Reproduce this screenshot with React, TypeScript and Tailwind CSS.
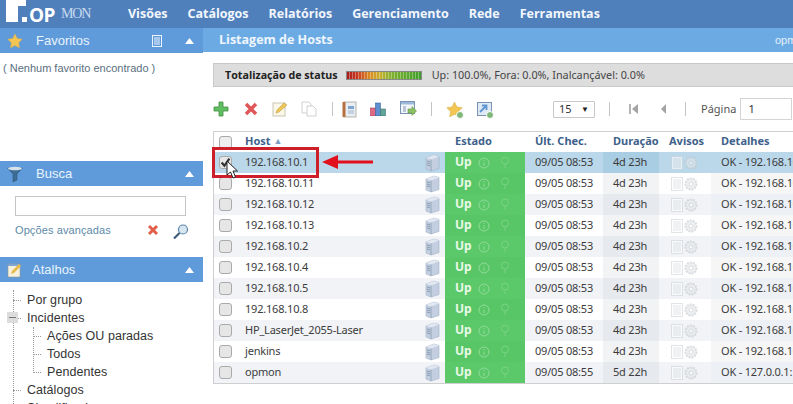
import React from 'react';

const hosts = [
  { name: '192.168.10.1', chec: '09/05 08:53', dur: '4d 23h', det: 'OK - 192.168.10.1' },
  { name: '192.168.10.11', chec: '09/05 08:53', dur: '4d 23h', det: 'OK - 192.168.10.11' },
  { name: '192.168.10.12', chec: '09/05 08:53', dur: '4d 23h', det: 'OK - 192.168.10.12' },
  { name: '192.168.10.13', chec: '09/05 08:53', dur: '4d 23h', det: 'OK - 192.168.10.13' },
  { name: '192.168.10.2', chec: '09/05 08:53', dur: '4d 23h', det: 'OK - 192.168.10.2' },
  { name: '192.168.10.4', chec: '09/05 08:53', dur: '4d 23h', det: 'OK - 192.168.10.4' },
  { name: '192.168.10.5', chec: '09/05 08:53', dur: '4d 23h', det: 'OK - 192.168.10.5' },
  { name: '192.168.10.8', chec: '09/05 08:53', dur: '4d 23h', det: 'OK - 192.168.10.8' },
  { name: 'HP_LaserJet_2055-Laser', chec: '09/05 08:53', dur: '4d 23h', det: 'OK - 192.168.10.9' },
  { name: 'jenkins', chec: '09/05 08:53', dur: '4d 23h', det: 'OK - 192.168.10.7' },
  { name: 'opmon', chec: '09/05 08:55', dur: '5d 22h', det: 'OK - 127.0.0.1: rta' },
];

const menu = ['Visões', 'Catálogos', 'Relatórios', 'Gerenciamento', 'Rede', 'Ferramentas'];

const Star = ({ s = 16 }: { s?: number }) => (
  <svg width={s} height={s} viewBox="0 0 16 16">
    <path d="M8 1l2.200 4.600 5 .7-3.600 3.500.9 5L8 12.400l-4.500 2.400.9-5L.8 6.300l5-.7z" fill="#f3c654" stroke="#dcae4a" strokeWidth=".6" />
  </svg>
);

const Up = () => (
  <svg width="9" height="6" viewBox="0 0 9 6">
    <path d="M4.500 0L9 6H0z" fill="#fff" />
  </svg>
);

const Plus2 = () => (
  <span className="absolute -right-[1px] -bottom-[1px] w-[8px] h-[8px] rounded-full bg-[#7fb77a] border border-white" />
);

const Server = () => (
  <svg width="15" height="18" viewBox="0 0 15 18" className="block">
    <path d="M1 4l8-3 5 1.500v12L6 17l-5-2z" fill="#c3cfe0" stroke="#a3b2c8" strokeWidth=".6" />
    <path d="M1 4l5 1.500L14 2.500 9 1z" fill="#e2e8f1" />
    <path d="M6 5.500V17" stroke="#8c9cb5" strokeWidth=".8" />
    <path d="M2 7l3 .8M2 9l3 .8M2 11l3 .8" stroke="#7b8ba6" strokeWidth=".8" />
  </svg>
);

const SectionHead = ({ icon, title, extra, labelAt = 'w-[36px]' }: { icon: React.ReactNode; title: string; extra?: React.ReactNode; labelAt?: string }) => (
  <div className="h-[25px] bg-[#5f9bdb] flex items-center text-[#eaf3fb]">
    <div className={`${labelAt} pl-[7px] flex items-center`}>{icon}</div>
    <span className="text-[13px]">{title}</span>
    <div className="ml-auto flex items-center pr-[9px]">
      {extra}
      <Up />
    </div>
  </div>
);

const Tree = ({ label, nested }: { label: string; nested?: boolean }) => (
  <div className={`h-[18px] flex items-center ${nested ? 'pl-[33px]' : 'pl-[13px]'}`}>
    <span className="w-[8px] border-t border-dotted border-[#999] mr-[6px]" />
    <span className="text-[#333] text-[12.5px] tracking-[0.05px]">{label}</span>
  </div>
);

const ToolIcon = ({ children, className = 'mr-[12px]' }: { children: React.ReactNode; className?: string }) => (
  <div className={`relative w-[18px] h-[18px] flex items-center justify-center ${className}`}>{children}</div>
);

const Sep = () => <div className="w-px h-[14px] bg-[#c4c4c4]" />;

export default function App() {
  return (
    <div className="relative w-[793px] h-[404px] overflow-hidden bg-white flex flex-col font-['Liberation_Sans',sans-serif] text-[12px]">
      <header className="h-[28px] bg-[#5080bc] flex items-center shrink-0">
        <div className="w-[128px] h-full relative flex items-end">
          {/* logo */}
          <svg width="21" height="23" viewBox="0 0 21 23" className="absolute left-[6px] top-0">
            <path d="M0 0H20V6H12V22H0z" fill="#fff" />
            <rect x="16" y="17" width="5" height="5" fill="#fff" />
          </svg>
          <span className="absolute left-[29px] top-[2px] text-white font-bold text-[19px] font-['Open_Sans',sans-serif] leading-[26px] tracking-[-0.5px]">OP</span>
          <span className="absolute left-[61px] top-[6px] text-[#c7daef] text-[14px] font-['Liberation_Serif',serif] leading-[15px] tracking-[-1.2px]">MON</span>
        </div>
        <nav className="flex items-center gap-[20px] text-[#f3f7fc] font-bold text-[12.5px] font-['Open_Sans',sans-serif]">
          {menu.map((m) => (
            <span key={m}>{m}</span>
          ))}
        </nav>
      </header>

      <div className="flex flex-1 min-h-0">
        <aside className="w-[203px] shrink-0">
          <SectionHead
            icon={<Star />}
            title="Favoritos"
            extra={
              <svg width="10" height="12" viewBox="0 0 10 12" className="mr-[23px]">
                <rect x=".5" y=".5" width="9" height="11" fill="none" stroke="#eef4fb" />
                <path d="M2 3h6M2 5h6M2 7h6M2 9h6" stroke="#eef4fb" />
              </svg>
            }
          />
          <div className="h-[108px] pl-[3px] pt-[7px] text-[11px] text-[#5a6f80]">( Nenhum favorito encontrado )</div>
          <SectionHead
            icon={
              <svg width="16" height="16" viewBox="0 0 16 16">
                <path d="M0.500 2h15L10 8v6l-4 2V8z" fill="#3d6c95" stroke="#25506f" strokeWidth=".5" />
                <ellipse cx="8" cy="2.500" rx="7" ry="1.800" fill="#d5e2ec" />
              </svg>
            }
            title="Busca"
          />
          <div className="h-[71px] px-[15px] pt-[10px]">
            <div className="w-[171px] h-[20px] border border-[#c6c6c6] bg-white" />
            <div className="flex items-center mt-[4px] h-[20px]">
              <span className="w-[132px] shrink-0 whitespace-nowrap text-[#5d8aa8] text-[11px] tracking-[0.1px]">Opções avançadas</span>
              <svg width="12" height="12" viewBox="0 0 12 12" className="shrink-0">
                <path d="M2 2l8 8M10 2l-8 8" stroke="#e2604a" strokeWidth="3" />
              </svg>
              <svg width="18" height="18" viewBox="0 0 18 18" className="shrink-0 ml-[13px] mt-[3px]">
                <circle cx="11" cy="6.500" r="4.500" fill="#d6e6f2" stroke="#5d86a8" strokeWidth="1.200" />
                <path d="M7.500 10L2 15.500" stroke="#3a5a78" strokeWidth="2.200" />
              </svg>
            </div>
          </div>
          <SectionHead
            labelAt="w-[32px]"
            icon={
              <svg width="16" height="16" viewBox="0 0 16 16">
                <rect x="1" y="2" width="12" height="13" fill="#f5f1df" stroke="#9a9a8a" strokeWidth=".6" />
                <rect x="1" y="2" width="12" height="2" fill="#7da5cd" />
                <path d="M4 12l1-3 7-7 2 2-7 7z" fill="#e9b949" />
              </svg>
            }
            title="Atalhos"
          />
          <div className="relative pt-[9px]">
            <div className="absolute left-[13px] top-[8px] h-[120px] border-l border-dotted border-[#999]" />
            <div className="absolute left-[33px] top-[45px] h-[46px] border-l border-dotted border-[#999]" />
            <div className="absolute left-[7px] top-[30px] w-[11px] h-[11px] bg-[#dcdcdc] flex items-center justify-center">
              <span className="w-[7px] h-px bg-[#777]" />
            </div>
            <Tree label="Por grupo" />
            <Tree label="Incidentes" />
            <Tree label="Ações OU paradas" nested />
            <Tree label="Todos" nested />
            <Tree label="Pendentes" nested />
            <Tree label="Catálogos" />
            <Tree label="Simplificados" />
          </div>
        </aside>

        <main className="flex-1 min-w-0 overflow-hidden">
          <div className="h-[24px] bg-[#6caae4] flex items-center pl-[16px] pt-[1px] text-[#eef6fd] overflow-hidden">
            <span className="font-bold text-[12.5px] font-['Open_Sans',sans-serif]">Listagem de Hosts</span>
            <span className="ml-auto text-[11px] text-[#e6f1fb] w-[18px] overflow-hidden">opmon</span>
          </div>

          <div className="ml-[10px] mt-[11px] h-[24px] bg-[#dddddd] border-y border-l border-[#c9c9c9] flex items-center pl-[11px]">
            <span className="font-bold text-[10.7px] text-[#222] font-['Open_Sans',sans-serif]">Totalização de status</span>
            <div className="ml-[8px] w-[76px] h-[9px] bg-[linear-gradient(90deg,#a81c1c_0%,#c83a20_14%,#d98a20_30%,#c8b030_45%,#7fb02e_60%,#3f9e2a_100%)] border border-[#888]">
              <div className="h-full bg-[repeating-linear-gradient(90deg,#00000000_0px,#00000000_2px,#ffffff55_2px,#ffffff55_3px)]" />
            </div>
            <span className="ml-[10px] text-[10.8px] text-[#444] font-['Noto_Sans',sans-serif]">Up: 100.0%, Fora: 0.0%, Inalcançável: 0.0%</span>
          </div>

          <div className="ml-[2px] mt-[10px] h-[24px] flex items-center pl-[7px]">
            <ToolIcon className="mr-[12px]">
              <svg width="16" height="16" viewBox="0 0 16 16"><path d="M6 1h4v5h5v4h-5v5H6v-5H1V6h5z" fill="#63bd62" stroke="#3f8f42" strokeWidth=".8" /></svg>
            </ToolIcon>
            <ToolIcon className="mr-[11px]">
              <svg width="14" height="14" viewBox="0 0 14 14"><path d="M2 2l10 10M12 2L2 12" stroke="#e0575a" strokeWidth="3.500" /></svg>
            </ToolIcon>
            <ToolIcon className="mr-[11px]">
              <svg width="16" height="16" viewBox="0 0 16 16">
                <rect x="1" y="2" width="12" height="13" fill="#fbf8ea" stroke="#c9c6b2" />
                <path d="M4 12l1-3 7-7 3 2-8 7z" fill="#eec65a" stroke="#b9932e" strokeWidth=".5" />
              </svg>
            </ToolIcon>
            <ToolIcon className="mr-[14px]">
              <svg width="16" height="16" viewBox="0 0 16 16" fill="#fff" stroke="#d0d0d0">
                <path d="M1 1h7l2 2v9H1z" /><path d="M6 5h6l3 3v7H6z" />
              </svg>
            </ToolIcon>
            <Sep />
            <ToolIcon className="ml-[7px] mr-[11px]">
              <svg width="15" height="17" viewBox="0 0 15 17">
                <rect x="2" y="1" width="12" height="15" fill="#e9eef5" stroke="#b7b3a8" />
                <rect x="0.500" y="1" width="3" height="15" fill="#b5703f" />
                <path d="M6 5h6v3H6z" fill="#7da5cd" /><path d="M6 10h6M6 12h6" stroke="#9fb3c9" />
              </svg>
            </ToolIcon>
            <ToolIcon className="mr-[12px]">
              <svg width="16" height="14" viewBox="0 0 16 14">
                <rect x="0.500" y="6" width="5" height="8" fill="#e06a85" stroke="#a83b55" strokeWidth=".6" />
                <rect x="5.500" y="1" width="5" height="13" fill="#5f8fce" stroke="#3b669e" strokeWidth=".6" />
                <rect x="10.500" y="7" width="5" height="7" fill="#62a39a" stroke="#3d7a72" strokeWidth=".6" />
              </svg>
            </ToolIcon>
            <ToolIcon className="mr-[14px]">
              <svg width="17" height="16" viewBox="0 0 17 16">
                <rect x=".5" y=".5" width="14" height="12" fill="#f2f6fb" stroke="#7a92b4" />
                <rect x="1" y="1" width="13" height="2.500" fill="#9db8d8" />
                <path d="M3 6h3M3 8h3M3 10h3" stroke="#8297b3" />
                <path d="M8 8h4V5.500l4.500 4.500-4.500 4.500V12H8z" fill="#8ec163" stroke="#5f9440" strokeWidth=".6" />
              </svg>
            </ToolIcon>
            <Sep />
            <ToolIcon className="ml-[13px] mr-[12px]">
              <Star s={17} />
              <Plus2 />
            </ToolIcon>
            <ToolIcon className="mr-[60px]">
              <svg width="15" height="14" viewBox="0 0 15 14">
                <rect x=".5" y=".5" width="14" height="13" fill="#dfeaf5" stroke="#7a92b4" />
                <path d="M3 10l6-6M5 3.500h4.500V8" stroke="#5f97d2" strokeWidth="1.800" fill="none" />
              </svg>
              <Plus2 />
            </ToolIcon>
            <div className="w-[42px] h-[17px] border border-[#c9c9c9] bg-white rounded-[1px] flex items-center px-[5px] text-[11px] text-[#333] font-['Noto_Sans',sans-serif]">
              15
              <span className="ml-auto text-[8px] text-[#222]">▼</span>
            </div>
            <div className="ml-[14px]"><Sep /></div>
            <svg width="11" height="12" viewBox="0 0 11 12" className="ml-[18px]">
              <path d="M1 1h2v10H1z" fill="#b4b4b4" /><path d="M10 1v10L4 6z" fill="#a4a4a4" />
            </svg>
            <svg width="7" height="12" viewBox="0 0 7 12" className="ml-[21px]">
              <path d="M6 1v10L1 6z" fill="#a4a4a4" />
            </svg>
            <div className="ml-[18px]"><Sep /></div>
            <span className="ml-[15px] text-[11px] text-[#555] font-['Noto_Sans',sans-serif]">Página</span>
            <div className="ml-[4px] w-[52px] h-[22px] shrink-0 border border-[#d4d4d4] bg-white flex items-center pl-[7px] text-[11px] text-[#333] font-['Noto_Sans',sans-serif]">1</div>
          </div>

          <div className="ml-[10px] mt-[10px] w-[640px] border border-[#cfcfcf] font-['Noto_Sans',sans-serif] text-[11px] tracking-[-0.2px] leading-none">
            <table className="w-full table-fixed border-collapse">
              <colgroup>
                <col className="w-[24px]" />
                <col className="w-[207px]" />
                <col className="w-[80px]" />
                <col className="w-[78px]" />
                <col className="w-[56px]" />
                <col className="w-[52px]" />
                <col />
              </colgroup>
              <thead>
                <tr className="h-[20px] text-left font-bold text-[#3e618c] tracking-normal">
                  <th className="pl-[5px]"><div className="w-[13px] h-[13px] rounded-[3px] border border-[#aaa] bg-[#eeeeee]" /></th>
                  <th className="pl-[7px] pb-[3px] font-bold">
                    Host <span className="text-[9px] text-[#7ea0c4] align-[1px]">▲</span>
                  </th>
                  <th className="pl-[10px] pb-[3px] font-bold">Estado</th>
                  <th className="pl-[10px] pb-[3px] font-bold">Últ. Chec.</th>
                  <th className="pl-[10px] pb-[3px] font-bold">Duração</th>
                  <th className="pl-[10px] pb-[3px] font-bold">Avisos</th>
                  <th className="pl-[10px] pb-[3px] font-bold">Detalhes</th>
                </tr>
              </thead>
              <tbody>
                {hosts.map((h, i) => {
                  const selected = i === 0;
                  const alt = i % 2 === 0;
                  const rowBg = selected ? 'bg-[#bad8ea]' : alt ? 'bg-[#f1f3f7]' : 'bg-white';
                  const durBg = selected ? 'bg-[#a9cde3]' : alt ? 'bg-[#e6e9ee]' : 'bg-[#f2f3f5]';
                  const detBg = selected ? 'bg-[#bad8ea]' : alt ? 'bg-[#edf0f4]' : 'bg-[#f6f6f6]';
                  return (
                    <tr key={h.name} className={`h-[21px] text-[#3c3c3c] ${rowBg}`}>
                      <td className="pl-[5px]">
                        <div className="relative w-[13px] h-[13px] rounded-[3px] border border-[#aaa] bg-[#e6e6e6]">
                          {selected && (
                            <svg width="11" height="11" viewBox="0 0 10 10" className="absolute left-0 top-0">
                              <path d="M1.500 5l2.500 3L8.500 1.500" stroke="#333" strokeWidth="2" fill="none" />
                            </svg>
                          )}
                        </div>
                      </td>
                      <td className="pl-[7px]">
                        <div className="flex items-center justify-between pr-[5px]">
                          <span className="-mt-[2px]">{h.name}</span>
                          <Server />
                        </div>
                      </td>
                      <td className={`pl-[10px] ${alt ? 'bg-[#5bc869]' : 'bg-[#58c666]'}`}>
                        <div className="flex items-center">
                          <span className="font-bold text-[12px] tracking-normal text-[#e8f9e8] -mt-[1px]">Up</span>
                          <svg width="12" height="12" viewBox="0 0 12 12" className="ml-[6px]" fill="none" stroke="#8fdc98">
                            <circle cx="6" cy="6" r="5" /><path d="M6 3v1M6 5.500V9" />
                          </svg>
                          <svg width="12" height="13" viewBox="0 0 12 13" className="ml-[9px]" fill="none" stroke="#79d384">
                            <circle cx="6" cy="4.500" r="3.500" /><path d="M6 8v4" />
                          </svg>
                        </div>
                      </td>
                      <td className="pl-[10px] pb-[2px]">{h.chec}</td>
                      <td className={`pl-[10px] pb-[2px] ${durBg}`}>{h.dur}</td>
                      <td className="pl-[12px]">
                        <div className="flex items-center gap-[1px] opacity-60">
                          <svg width="12" height="14" viewBox="0 0 12 14" fill="#fff" stroke="#cfd5da">
                            <rect x=".5" y=".5" width="11" height="13" />
                            <path d="M2 3h8M2 5h8M2 7h8M2 9h8M2 11h8" />
                          </svg>
                          <svg width="14" height="14" viewBox="0 0 14 14" fill="#e4e6e9" stroke="#c4c8cc">
                            <circle cx="7" cy="7" r="5.500" strokeDasharray="2 1" strokeWidth="2" />
                            <circle cx="7" cy="7" r="2" fill="#fff" />
                          </svg>
                        </div>
                      </td>
                      <td className={`pl-[10px] pb-[2px] whitespace-nowrap overflow-hidden ${detBg}`}>{h.det}</td>
                    </tr>
                  );
                })}
              </tbody>
            </table>
          </div>
        </main>
      </div>

      {/* annotation over the first row */}
      <div className="absolute left-[212px] top-[147px] w-[107px] h-[31px] border-[3px] border-[#cc1f2a]" />
      <svg width="52" height="14" viewBox="0 0 52 14" className="absolute left-[322px] top-[155px]">
        <path d="M0 7L16 0V5.500H51V8.500H16V14z" fill="#e2101c" />
      </svg>
      <svg width="14" height="20" viewBox="0 0 14 20" className="absolute left-[226px] top-[160px]">
        <path d="M1 1v14l3.500-3 2.500 6 2.500-1-2.500-6h4.500z" fill="#fff" stroke="#222" strokeWidth="1" />
      </svg>
    </div>
  );
}
